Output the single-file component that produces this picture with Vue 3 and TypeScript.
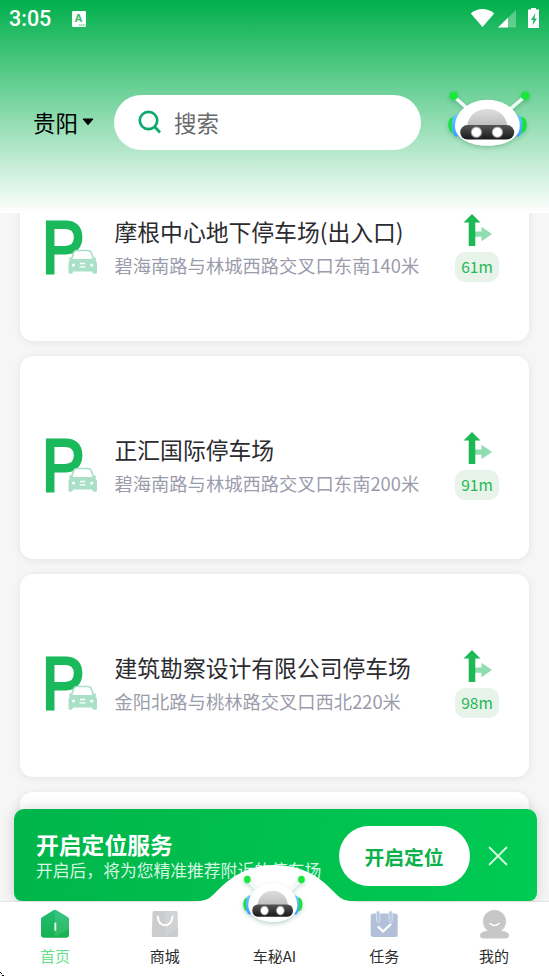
<script setup lang="ts">
import { defineComponent, h } from 'vue'

interface Lot {
  name: string
  address: string
  distance: string
}

const lots: Lot[] = [
  { name: '摩根中心地下停车场(出入口)', address: '碧海南路与林城西路交叉口东南140米', distance: '61m' },
  { name: '正汇国际停车场', address: '碧海南路与林城西路交叉口东南200米', distance: '91m' },
  { name: '建筑勘察设计有限公司停车场', address: '金阳北路与桃林路交叉口西北220米', distance: '98m' },
]

const c = (cx: number, cy: number, r: number, fill: string) => h('circle', { cx, cy, r, fill })

const RobotIcon = defineComponent({
  props: { uid: { type: String, required: true } },
  setup(props) {
    const stop = (offset: string, color: string) => h('stop', { offset, 'stop-color': color })
    const grad = (id: string, a: string, b: string) =>
      h('linearGradient', { id: props.uid + id, x1: 0, y1: 0, x2: 0, y2: 1 }, [stop('0', a), stop('1', b)])
    const url = (id: string) => `url(#${props.uid}${id})`
    return () =>
      h('svg', { viewBox: '0 0 90 66', preserveAspectRatio: 'none' }, [
        h('defs', [
          grad('dome', '#dedede', '#bdbdbd'),
          grad('visor', '#555', '#191919'),
          grad('ear', '#66c9ff', '#3d9dff'),
          h('radialGradient', { id: props.uid + 'eye' }, [stop('0.65', '#fff'), stop('1', '#ffffff00')]),
        ]),
        h('path', { d: 'M10 8.500L25 22M81 8.500L65 22', stroke: '#f1fbf8', 'stroke-width': 3.4 }),
        c(9.7, 7.7, 4.4, '#19e83c'),
        c(81.3, 7.7, 4.4, '#19e83c'),
        h('ellipse', { cx: 9.5, cy: 37, rx: 5.2, ry: 8, fill: '#18e436' }),
        h('ellipse', { cx: 77.5, cy: 37, rx: 5.2, ry: 8, fill: '#18e436' }),
        h('ellipse', { cx: 12.5, cy: 37.5, rx: 5, ry: 11.3, fill: url('ear') }),
        h('ellipse', { cx: 73.5, cy: 37.5, rx: 5, ry: 11.3, fill: url('ear') }),
        h('path', { d: 'M43.5 11.7C62 11.7 75.800 24 75.800 38C75.800 50 62 57.800 43.5 57.800S11 50 11 38C11 24 25 11.7 43.5 11.7Z', fill: '#fff' }),
        h('path', { d: 'M23.300 38C24 28 32 21 43.300 21S62.600 28 63.300 38Z', fill: url('dome') }),
        h('rect', { x: 16.2, y: 37, width: 54, height: 14.6, rx: 7.3, fill: url('visor') }),
        c(32.4, 44.3, 6.2, url('eye')),
        c(53.4, 44.3, 6.2, url('eye')),
      ])
  },
})
</script>

<template>
  <div class="screen">
    <header class="header">
      <div class="status">
        <span class="time">3:05</span>
        <svg class="st-app" viewBox="0 0 14 16">
          <rect width="14" height="16" rx="1.2" fill="#fff" />
          <text x="6.6" y="11.3" text-anchor="middle" class="st-letter">A</text>
          <path d="M7 14h6.500" stroke="#2dbb68" stroke-width="1" stroke-dasharray="1.500 .5" />
        </svg>
        <svg class="st-right" viewBox="0 0 70 22">
          <path d="M.8 5.500C7-.5 18-.5 24.200 5.500L12.500 19Z" fill="#fff" />
          <path d="M46 1.800V19.500H28Z" fill="#fff" fill-opacity=".3" />
          <path d="M38 9.700V19.500H28Z" fill="#fff" />
          <path d="M61 1.500V0h5v1.500h3V20H58V1.500Z" fill="#fff" />
          <path d="M65.500 5L61 12h2.500l-1.200 5.500L67 10.500h-2.500Z" fill="#24b862" />
        </svg>
      </div>
      <div class="searchrow">
        <div class="city">贵阳<svg viewBox="0 0 12 8"><path d="M1 1h10L6 6.800Z" stroke="#000" stroke-width="1" stroke-linejoin="round" /></svg></div>
        <div class="search">
          <svg viewBox="0 0 24 24" fill="none" stroke="#0aaa6c" stroke-width="2.700">
            <circle cx="10.500" cy="10.500" r="8.700" />
            <path d="M16.500 16.500L22 22.500" />
          </svg>
          <span>搜索</span>
        </div>
        <RobotIcon uid="top" class="robot" />
      </div>
    </header>

    <main class="list">
      <article v-for="lot in lots" :key="lot.name" class="card">
        <svg class="park" viewBox="0 0 54 56">
          <text transform="translate(-3 53.500) scale(.86 1)" class="park-letter">P</text>
          <g class="car">
            <path d="M26.500 40.500L28.500 34Q29.500 31.500 32 31.500H43Q45.500 31.500 46.500 34L48.500 40.500" fill="#fff" stroke="#abe0c8" stroke-width="1.700" />
            <path d="M24.500 38.500h2.500v1.500h21v-1.500h2.500q1.500 1 0 2.500Q52 43 52 45V53.500Q52 54.800 50.500 54.800H48.500Q47.500 54.800 47.300 52.500H28Q27.700 54.800 26.500 54.800H25Q23.500 54.800 23.500 53.500V45Q23.500 43 24.800 41Q23 39.500 24.500 38.500Z" fill="#abe0c8" />
            <circle cx="28.500" cy="46" r="1.600" fill="#fff" />
            <circle cx="46.700" cy="46" r="1.600" fill="#fff" />
            <path d="M35 44.500h5M34.500 47.800h6" stroke="#fff" stroke-width="1.300" />
          </g>
        </svg>
        <div class="info">
          <h2>{{ lot.name }}</h2>
          <p>{{ lot.address }}</p>
        </div>
        <div class="go">
          <svg viewBox="0 0 30 32">
            <path d="M11 17.500H18.500V12.800L29 20L18.500 27.200V22.800H11Z" fill="#90ddb0" />
            <path d="M9 0L17.500 8.500H12.300V32H5.700V8.500H.500Z" fill="#1cb954" />
          </svg>
          <span>{{ lot.distance }}</span>
        </div>
      </article>
      <article class="card"></article>
    </main>

    <footer class="bottom">
      <section class="banner">
        <div class="btext">
          <h3>开启定位服务</h3>
          <p>开启后，将为您精准推荐附近的停车场</p>
        </div>
        <button class="open">开启定位</button>
        <svg class="close" viewBox="0 0 20 20"><path d="M1 1L19 19M19 1L1 19" stroke="#d5f6e1" stroke-width="1.800" /></svg>
      </section>
      <nav class="tabs">
        <svg class="hump" viewBox="0 0 164 40">
          <path d="M0 37.500C14 37.500 17 34 24 27C40 10 58 1 82 1S124 10 140 27C147 34 150 37.500 164 37.500V40H0Z" fill="#fff" />
        </svg>
        <a class="tab active">
          <svg viewBox="0 0 30 30">
            <defs><linearGradient id="home" x2="0" y2="1"><stop stop-color="#22bf74" /><stop offset="1" stop-color="#16b14f" /></linearGradient></defs>
            <path d="M13.500 1.200Q15 .3 16.500 1.200L28 8.200Q29 9 29 10V26Q29 28.700 26 28.700H4Q1 28.700 1 26V10Q1 9 2 8.200Z" fill="url(#home)" />
            <path d="M15 1Q15.800 .8 16.500 1.200L28 8.200Q29 9 29 10V20L15 28Z" fill="#fff" fill-opacity=".1" />
            <path d="M15.300 14.500V21" stroke="#ddfae5" stroke-width="2" stroke-linecap="round" />
          </svg>
          <span>首页</span>
        </a>
        <a class="tab">
          <svg viewBox="0 0 30 30">
            <path d="M4 2H26Q27.500 2 27.500 3.500L28.200 26.500Q28.200 28 26.500 28H3.500Q1.800 28 1.800 26.500L2.500 3.500Q2.500 2 4 2Z" fill="#cbccce" />
            <path d="M15 2H26Q27.500 2 27.500 3.500L28 18L15 28Z" fill="#fff" fill-opacity=".13" />
            <path d="M7.800 7.500C8 19 22 19 22.500 7.500" fill="none" stroke="#fff" stroke-width="2" stroke-linecap="round" />
          </svg>
          <span>商城</span>
        </a>
        <a class="tab">
          <RobotIcon uid="tab" class="tabrobot" />
          <span>车秘AI</span>
        </a>
        <a class="tab">
          <svg viewBox="0 0 30 30">
            <rect x="1.700" y="4.500" width="27" height="23.500" rx="2.500" fill="#b3c0da" />
            <g fill="#b8c5dd" stroke="#e3e9f3" stroke-width=".7">
              <rect x="7.500" y="2" width="3.300" height="11" rx="1.600" />
              <rect x="20" y="2" width="3.300" height="11" rx="1.600" />
            </g>
            <path d="M9.500 18L14 22.500L21.500 15.500" fill="none" stroke="#fff" stroke-width="2.200" stroke-linecap="round" />
          </svg>
          <span>任务</span>
        </a>
        <a class="tab">
          <svg viewBox="0 0 30 30">
            <circle cx="15.500" cy="12.500" r="11.500" fill="#c6c7c8" />
            <path d="M1 26.500C1 23 6 21.500 10 22H20C25 21.500 30 23 30 26.500Q30 29.500 26 29.500H5Q1 29.500 1 26.500Z" fill="#c6c7c8" />
            <path d="M11 14.500Q15.500 18.500 20 14.500" fill="none" stroke="#fff" stroke-width="1.600" stroke-linecap="round" />
          </svg>
          <span>我的</span>
        </a>
      </nav>
    </footer>
    <svg class="pointer" viewBox="0 0 4 4" shape-rendering="crispEdges"><path d="M0 0h1v1H0zM1 1h1v1H1zM2 3h2v1H2z" /></svg>
  </div>
</template>

<style>
body {
  overflow: hidden;
}
</style>

<style scoped>
.screen {
  position: relative;
  width: 549px;
  height: 976px;
  overflow: hidden;
  background: #f6f6f6;
  font-family: 'Noto Sans CJK SC', sans-serif;
  display: flex;
  flex-direction: column;
}
h2, h3, p {
  margin: 0;
  font-weight: 400;
  white-space: nowrap;
}
svg {
  display: block;
}
.header {
  position: relative;
  z-index: 1;
  flex: none;
  height: 213px;
  background: linear-gradient(#00af4b, #fff);
}
.status {
  height: 38px;
  padding: 0 9px;
  display: flex;
  align-items: center;
}
.time {
  font: 500 21.5px/38px Roboto, sans-serif;
  color: #fff;
  width: 63px;
}
.st-app {
  width: 14px;
  height: 16px;
}
.st-letter {
  font: 700 11px 'Liberation Sans', sans-serif;
  fill: #2dbb68;
}
.st-right {
  width: 70px;
  height: 22px;
  margin: -1px 0 0 auto;
}
.searchrow {
  display: flex;
  align-items: center;
  margin-top: 51px;
  height: 66px;
  padding: 0 15px 0 33px;
}
.city {
  width: 81px;
  display: flex;
  align-items: center;
  gap: 4px;
  font-size: 22.5px;
}
.city svg {
  width: 12px;
  height: 8px;
}
.search {
  width: 307px;
  height: 55px;
  border-radius: 28px;
  background: #fff;
  box-sizing: border-box;
  padding-left: 24px;
  display: flex;
  align-items: center;
  gap: 12px;
  font-size: 22.5px;
  color: #696969;
}
.search svg {
  width: 24px;
  height: 24px;
}
.robot {
  width: 90px;
  height: 66px;
  margin: -2px 0 0 auto;
  filter: drop-shadow(0 2px 2px rgba(0, 90, 50, 0.25));
}
.list {
  margin-top: -75px;
  padding: 0 20px;
  display: flex;
  flex-direction: column;
  gap: 15px;
}
.card {
  flex: none;
  box-sizing: border-box;
  height: 203px;
  border-radius: 13px;
  background: #fff;
  box-shadow: 0 1px 8px rgba(0, 0, 0, 0.08);
  padding: 0 30px 0 25px;
  display: flex;
  align-items: flex-start;
}
.park {
  width: 54px;
  height: 56px;
  margin-top: 81px;
  overflow: visible;
}
.park-letter {
  font: 400 74px 'Liberation Sans', sans-serif;
  fill: #1ab95c;
  stroke: #1ab95c;
  stroke-width: 3;
}
.info {
  margin: 77px 0 0 15.5px;
}
.info h2 {
  font-size: 22.8px;
  line-height: 34px;
  color: #2b2b30;
}
.info p {
  font-size: 18.3px;
  line-height: 32px;
  color: #9b9cab;
}
.go {
  margin: 76px 0 0 auto;
  display: flex;
  flex-direction: column;
  align-items: center;
}
.go svg {
  width: 30px;
  height: 32px;
  margin-left: 2px;
}
.go span {
  margin-top: 6px;
  width: 44px;
  height: 30px;
  border-radius: 10px;
  background: #e8f4e9;
  color: #22b955;
  font-size: 15.5px;
  line-height: 29px;
  text-align: center;
}
.bottom {
  position: absolute;
  left: 0;
  right: 0;
  bottom: 0;
}
.banner {
  margin: 0 12px 1px 14px;
  height: 92px;
  box-sizing: border-box;
  border-radius: 10px 10px 8px 8px;
  background: linear-gradient(100deg, #00b54a, #00cb53);
  box-shadow: 0 0 14px rgba(0, 0, 0, 0.16);
  padding: 2px 29px 0 22px;
  display: flex;
  align-items: center;
  color: #fff;
}
.btext {
  width: 302.5px;
}
.btext h3 {
  font-size: 22.8px;
  font-weight: 700;
  line-height: 28px;
}
.btext p {
  font-size: 16.8px;
  line-height: 22px;
  color: #d5f6e1;
}
.open {
  flex: none;
  width: 131px;
  height: 60px;
  border: 0;
  padding: 0;
  border-radius: 30px;
  background: #fff;
  color: #0cb14b;
  font: 700 19.8px 'Noto Sans CJK SC', sans-serif;
}
.close {
  width: 20px;
  height: 20px;
  margin-left: auto;
}
.tabs {
  position: relative;
  height: 74px;
  background: #fff;
  display: grid;
  grid-template-columns: repeat(5, 1fr);
  grid-template-rows: 74px;
  box-shadow: 0 -1px 1px rgba(0, 0, 0, 0.05);
}
.hump {
  position: absolute;
  left: 193px;
  top: -38px;
  width: 164px;
  height: 40px;
}
.tab {
  position: relative;
  box-sizing: border-box;
  min-height: 0;
  display: flex;
  flex-direction: column;
  align-items: center;
  justify-content: flex-end;
  gap: 5px;
  padding-bottom: 8px;
  color: #2c2c2c;
  font-size: 15px;
  line-height: 24px;
}
.tab svg {
  flex: none;
  width: 30px;
  height: 30px;
}
.tab .tabrobot {
  width: 68px;
  height: 56px;
  margin-bottom: 10px;
  filter: drop-shadow(0 2px 2px rgba(0, 90, 60, 0.25));
}
.active {
  color: #65df89;
}
.pointer {
  position: absolute;
  left: 0;
  bottom: 0;
  width: 4px;
  height: 4px;
}
</style>
